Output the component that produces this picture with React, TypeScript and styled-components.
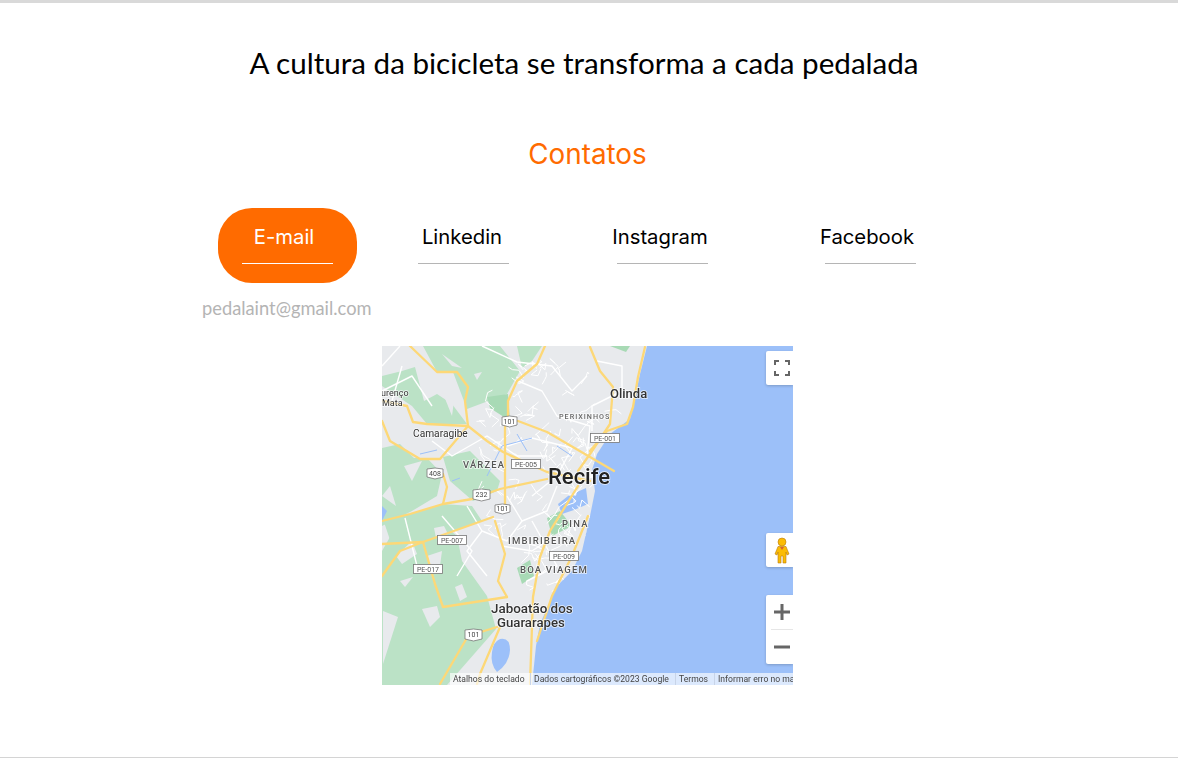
import React from "react";
import styled, { createGlobalStyle } from "styled-components";

const Global = createGlobalStyle`
  html, body { margin: 0; padding: 0; background: #fff; }
  body { font-family: "Inter", "Liberation Sans", sans-serif; }
`;

const Page = styled.div`
  width: 1178px;
  height: 758px;
  box-sizing: border-box;
  border-top: 3px solid #d9d9d9;
  border-bottom: 1px solid #d4d4d4;
  overflow: hidden;
  display: flex;
  flex-direction: column;
`;
const Title = styled.h1`
  margin: 39px 0 0;
  padding-right: 10px;
  height: 42px;
  font: 400 29.6px/42px "Lato", sans-serif;
  color: #000;
  text-align: center;
`;
const Heading = styled.h2`
  margin: 53px 0 0;
  padding-right: 3px;
  height: 34px;
  font: 400 27.8px/34px "Inter", sans-serif;
  color: #ff6b00;
  text-align: center;
`;
const Tabs = styled.nav`
  margin: 37px 0 0 218px;
  display: grid;
  grid-template-columns: 176px 199px 208px 139px;
`;
const Tab = styled.a<{ $active?: boolean }>`
  width: 139px;
  height: 75px;
  box-sizing: border-box;
  padding-top: 14px;
  display: flex;
  flex-direction: column;
  align-items: center;
  border-radius: 34px;
  background: ${(p) => (p.$active ? "#ff6b00" : "transparent")};
  color: ${(p) => (p.$active ? "#fff" : "#000")};
`;
const TabLabel = styled.span<{ $shift: number }>`
  height: 29px;
  margin-right: ${(p) => p.$shift}px;
  font: 400 20.3px/29px "Inter", sans-serif;
  white-space: nowrap;
`;
const TabLine = styled.span<{ $active?: boolean }>`
  width: 91px;
  height: 1px;
  margin-top: 12px;
  background: ${(p) => (p.$active ? "#fff" : "#b5b5b5")};
`;
const Email = styled.p`
  margin: 12px 0 0 202px;
  height: 26px;
  font: 400 18.3px/26px "Lato", sans-serif;
  color: #b4b4b4;
`;
const MapFrame = styled.div`
  position: relative;
  width: 411px;
  height: 339px;
  margin: 25px 0 0 382px;
  overflow: hidden;
  background: #9cc0f9;
`;
const MapArt = styled.svg`
  display: block;
  width: 411px;
  height: 339px;
`;
const MapButton = styled.div<{ $top: number; $height: number }>`
  position: absolute;
  top: ${(p) => p.$top}px;
  right: 0;
  width: 27px;
  height: ${(p) => p.$height}px;
  box-sizing: border-box;
  padding-left: 5px;
  display: flex;
  flex-direction: column;
  align-items: center;
  justify-content: center;
  background: #fff;
  border-radius: 2px 0 0 2px;
  box-shadow: 0 1px 3px rgba(0, 0, 0, 0.2);
`;
const ZoomCell = styled.div`
  width: 100%;
  flex: 1;
  display: flex;
  align-items: center;
  justify-content: center;
  & + & { border-top: 1px solid #e6e6e6; }
`;
const Attribution = styled.div`
  position: absolute;
  left: 68px;
  bottom: 0;
  height: 12px;
  display: flex;
  white-space: nowrap;
  font: 400 8.6px/13px "Roboto", sans-serif;
  color: #444;
  filter: blur(0.3px);
`;
const AttrItem = styled.span<{ $width: number }>`
  width: ${(p) => p.$width}px;
  flex: none;
  box-sizing: border-box;
  padding-left: 3px;
  background: rgba(255, 255, 255, 0.65);
  & + & { border-left: 1px solid #c8d4e8; }
`;

const LAND = "M0 0H265L258 28L251 61L248 73L228 88L215 108L210 124L213 145L208 170L200 205L190 225L175 240L158 278L154 300L150 339H0Z";
const greens = [
  "41,0 118,0 138,25 125,48 85,63 71,26 55,26",
  "33,21 42,55 55,48 70,58 85,78 45,78 30,60 0,40 0,30 20,25",
  "0,102 18,98 32,112 45,112 60,128 55,150 30,165 0,180",
  "61,111 88,105 118,135 115,145 91,155 68,135",
  "0,205 20,170 45,165 75,190 80,215 105,250 114,283 65,339 0,339",
  "0,170 30,168 60,158 90,160 100,175 70,185 40,195 10,200",
  "135,0 160,0 150,15 140,22",
];
const grays = [
  "1,265 16,271 1,318",
  "40,263 55,260 58,271 48,281",
  "73,241 80,238 85,251 78,255",
  "18,235 31,231 23,241",
  "14,210 30,195 35,208 20,218",
  "45,210 60,205 58,220 50,225",
  "52,182 62,180 66,188 54,192",
  "0,150 8,140 14,160",
  "60,8 80,22 70,20",
  "92,28 100,26 95,34",
  "60,45 72,55 70,70",
  "22,120 40,115 30,135",
];
const darkGreen = [
  "105,51 126,48 128,75 108,62",
  "135,222 148,214 152,230 140,238",
  "228,0 248,0 244,6",
  "165,172 178,165 190,180 170,190",
];
const highways = [
  "M28 0L55 26H75L86 41L83 55L86 80L105 95L121 106L165 126L208 135",
  "M163 0L155 18L135 35L126 55L126 70L123 81V158",
  "M0 55L25 60L31 76L45 78L86 80",
  "M0 75L8 95L38 113L58 113L86 80",
  "M61 128L65 141L61 158L28 168L0 175",
  "M61 158L90 153L118 143L165 133",
  "M136 75L165 86L208 111L232 125",
  "M208 1L218 25L231 41L228 78L208 108L196 125",
  "M263 1L256 31L251 61L245 78L225 85L208 105",
  "M0 198L41 196L111 171",
  "M113 175L123 208L116 235L125 251",
  "M41 196L53 238L61 261L125 251",
  "M0 230L18 205L41 196",
  "M196 140L168 185L158 211L151 251L148 338",
  "M206 170L190 210L170 250L155 295",
  "M118 281L98 328L95 338",
  "M115 281L86 290L58 338",
];
const roads = [
  "M100 0L135 16L170 20L190 45L205 30",
  "M136 35L160 45L175 70L208 80L205 110",
  "M0 20L18 0M20 20L10 55",
  "M50 95L70 110L105 90L135 110L165 110",
  "M125 100L150 92L190 102L175 130L150 150",
  "M125 150L140 175L165 165L175 140",
  "M85 160L100 185L125 195L140 175M100 185L85 205L105 230",
  "M23 172L35 220M60 170L90 205L75 230",
  "M215 15L240 20L240 45L210 60L210 85",
  "M150 175L175 220L145 235",
  "M120 200L150 205L165 195",
  "M0 45L30 30L50 60",
];

// A dense street mesh for the built-up part of the city, from a small seeded generator.
function cityStreets(): string[] {
  let seed = 2023;
  const rnd = () => {
    seed = (seed * 16807) % 2147483647;
    return seed / 2147483647;
  };
  const out: string[] = [];
  for (let i = 0; i < 120; i++) {
    const a = rnd() * Math.PI * 2;
    const r = Math.sqrt(rnd());
    let x = 165 + Math.cos(a) * r * 68;
    let y = 125 + Math.sin(a) * r * 115;
    let d = `M${x.toFixed(1)} ${y.toFixed(1)}`;
    for (let j = 0; j < 3; j++) {
      x += (rnd() - 0.5) * 18;
      y += (rnd() - 0.5) * 18;
      d += `L${x.toFixed(1)} ${y.toFixed(1)}`;
    }
    out.push(d);
  }
  return out;
}
const streets = cityStreets();

const blue = [
  "M118 293Q128 291 128 304Q127 318 115 326Q108 318 110 306Q111 296 118 293Z",
  "M176 158L186 150L204 142L206 158L192 164L180 168Z",
  "M0 160L5 165L0 175Z",
];
const streams = [
  "M105 130L120 100L150 92",
  "M135 88L145 105",
  "M38 108L55 104",
  "M175 100L190 110",
  "M70 135L78 132",
];

type Lbl = { t: string; x: number; y: number; s: number; w?: number; sp?: number; c?: string };
const labels: Lbl[] = [
  { t: "Recife", x: 166, y: 138, s: 22, w: 500, c: "#222" },
  { t: "Olinda", x: 228, y: 52, s: 13, w: 500, c: "#333" },
  { t: "Camaragibe", x: 31, y: 91, s: 10.2, c: "#333" },
  { t: "urenço", x: -1, y: 50, s: 9, c: "#333" },
  { t: "Mata", x: 0, y: 60, s: 9, c: "#333" },
  { t: "VÁRZEA", x: 81, y: 122, s: 9.4, w: 500, sp: 1.2, c: "#555" },
  { t: "PERIXINHOS", x: 177, y: 73, s: 7.2, w: 500, sp: 1, c: "#666" },
  { t: "PINA", x: 180, y: 181, s: 9.4, w: 500, sp: 1.3, c: "#555" },
  { t: "IMBIRIBEIRA", x: 126, y: 198, s: 9.6, w: 500, sp: 1.2, c: "#555" },
  { t: "BOA VIAGEM", x: 138, y: 227, s: 9.6, w: 500, sp: 1.1, c: "#555" },
  { t: "Jaboatão dos", x: 109, y: 267, s: 13.4, w: 500, c: "#333" },
  { t: "Guararapes", x: 115, y: 281, s: 13.2, w: 500, c: "#333" },
];
const shields = [
  { t: "101", x: 120, y: 70, w: 15, h: 11 },
  { t: "408", x: 45, y: 122, w: 16, h: 11 },
  { t: "232", x: 91, y: 143, w: 17, h: 12 },
  { t: "101", x: 113, y: 158, w: 15, h: 10 },
  { t: "101", x: 83, y: 283, w: 17, h: 12 },
];
const plates = [
  { t: "PE-005", x: 129, y: 113 },
  { t: "PE-001", x: 208, y: 87 },
  { t: "PE-007", x: 55, y: 189 },
  { t: "PE-017", x: 31, y: 218 },
  { t: "PE-009", x: 167, y: 205 },
];

const FullscreenIcon = () => (
  <svg width="16" height="16" viewBox="0 0 16 16" fill="none" stroke="#666" strokeWidth="2">
    <path d="M1 5V1H5M11 1H15V5M15 11V15H11M5 15H1V11" />
  </svg>
);
const Pegman = () => (
  <svg width="16" height="27" viewBox="0 0 16 27">
    <circle cx="8" cy="5" r="4" fill="#fbbc04" stroke="#b97a12" strokeWidth="0.6" />
    <path d="M4 9.5H12L15 17L13 18L12 15V26H9V19H7V26H4V15L3 18L1 17Z" fill="#fbbc04" stroke="#b97a12" strokeWidth="0.6" />
    <path d="M6 10L8 13L10 10Z" fill="#d9652b" />
  </svg>
);
const PlusIcon = () => (
  <svg width="16" height="16" viewBox="0 0 16 16">
    <path d="M0 6.5H6.5V0H9.5V6.5H16V9.5H9.5V16H6.5V9.5H0Z" fill="#666" />
  </svg>
);
const MinusIcon = () => (
  <svg width="16" height="4" viewBox="0 0 16 4">
    <path d="M0 .5H16V3.5H0Z" fill="#666" />
  </svg>
);

const tabs = [
  { label: "E-mail", shift: 7, active: true },
  { label: "Linkedin", shift: 3 },
  { label: "Instagram", shift: 5 },
  { label: "Facebook", shift: 7 },
];

export default function App() {
  return (
    <Page>
      <Global />
      <Title>A cultura da bicicleta se transforma a cada pedalada</Title>
      <Heading>Contatos</Heading>
      <Tabs>
        {tabs.map((t) => (
          <Tab key={t.label} $active={t.active}>
            <TabLabel $shift={t.shift}>{t.label}</TabLabel>
            <TabLine $active={t.active} />
          </Tab>
        ))}
      </Tabs>
      <Email>pedalaint@gmail.com</Email>
      <MapFrame>
        <MapArt viewBox="0 0 411 339" fontFamily="Roboto, sans-serif">
          <defs>
            <clipPath id="landClip"><path d={LAND} /></clipPath>
            <filter id="soft" x="0" y="0" width="100%" height="100%">
              <feGaussianBlur stdDeviation="0.5" />
            </filter>
            <filter id="softText" x="-5%" y="-5%" width="110%" height="110%">
              <feGaussianBlur stdDeviation="0.25" />
            </filter>
          </defs>
          <rect width="411" height="339" fill="#9cc0f9" />
          <g filter="url(#soft)">
            <path d={LAND} fill="#e8eaed" />
            {greens.map((p) => <polygon key={p} points={p} fill="#bbe2c6" />)}
            {grays.map((p) => <polygon key={p} points={p} fill="#e8eaed" />)}
            {darkGreen.map((p) => <polygon key={p} points={p} fill="#a8dab5" />)}
            {blue.map((d) => <path key={d} d={d} fill="#9cc0f9" />)}
            <g fill="none" stroke="#fff" strokeWidth="1" strokeLinejoin="round" clipPath="url(#landClip)">
              {streets.map((d) => <path key={d} d={d} />)}
            </g>
            <g fill="none" stroke="#fff" strokeWidth="1.4" strokeLinejoin="round">
              {roads.map((d) => <path key={d} d={d} />)}
            </g>
            <g fill="none" stroke="#9cc0f9" strokeWidth="1">
              {streams.map((d) => <path key={d} d={d} />)}
            </g>
            <g fill="none" stroke="#fdd877" strokeWidth="2.3" strokeLinejoin="round" strokeLinecap="round">
              {highways.map((d) => <path key={d} d={d} />)}
            </g>
          </g>
          <g filter="url(#softText)">
            {shields.map((s) => (
              <g key={s.x + s.t}>
                <path
                  d={`M${s.x} ${s.y + 1}L${s.x + s.w / 2} ${s.y}L${s.x + s.w} ${s.y + 1}V${s.y + s.h - 2}L${s.x + s.w / 2} ${s.y + s.h}L${s.x} ${s.y + s.h - 2}Z`}
                  fill="#fff"
                  stroke="#777"
                  strokeWidth="0.8"
                />
                <text x={s.x + s.w / 2} y={s.y + s.h / 2 + 2.4} textAnchor="middle" fontSize="7" fill="#444">{s.t}</text>
              </g>
            ))}
            {plates.map((s) => (
              <g key={s.t}>
                <rect x={s.x + 0.5} y={s.y + 0.5} width="29" height="9" fill="#fff" stroke="#777" strokeWidth="0.8" />
                <text x={s.x + 15} y={s.y + 7.6} textAnchor="middle" fontSize="7" fill="#555">{s.t}</text>
              </g>
            ))}
            {labels.map((l) => (
              <text
                key={l.t}
                x={l.x}
                y={l.y}
                fontSize={l.s}
                fontWeight={l.w ?? 400}
                letterSpacing={l.sp ?? 0}
                fill={l.c}
                stroke="#fff"
                strokeOpacity="0.75"
                strokeWidth="1.6"
                paintOrder="stroke"
              >
                {l.t}
              </text>
            ))}
          </g>
        </MapArt>
        <MapButton $top={5} $height={34}><FullscreenIcon /></MapButton>
        <MapButton $top={187} $height={34}><Pegman /></MapButton>
        <MapButton $top={249} $height={69}>
          <ZoomCell><PlusIcon /></ZoomCell>
          <ZoomCell><MinusIcon /></ZoomCell>
        </MapButton>
        <Attribution>
          <AttrItem $width={80}>Atalhos do teclado</AttrItem>
          <AttrItem $width={145}>Dados cartográficos ©2023 Google</AttrItem>
          <AttrItem $width={39}>Termos</AttrItem>
          <AttrItem $width={100}>Informar erro no mapa</AttrItem>
        </Attribution>
      </MapFrame>
    </Page>
  );
}
